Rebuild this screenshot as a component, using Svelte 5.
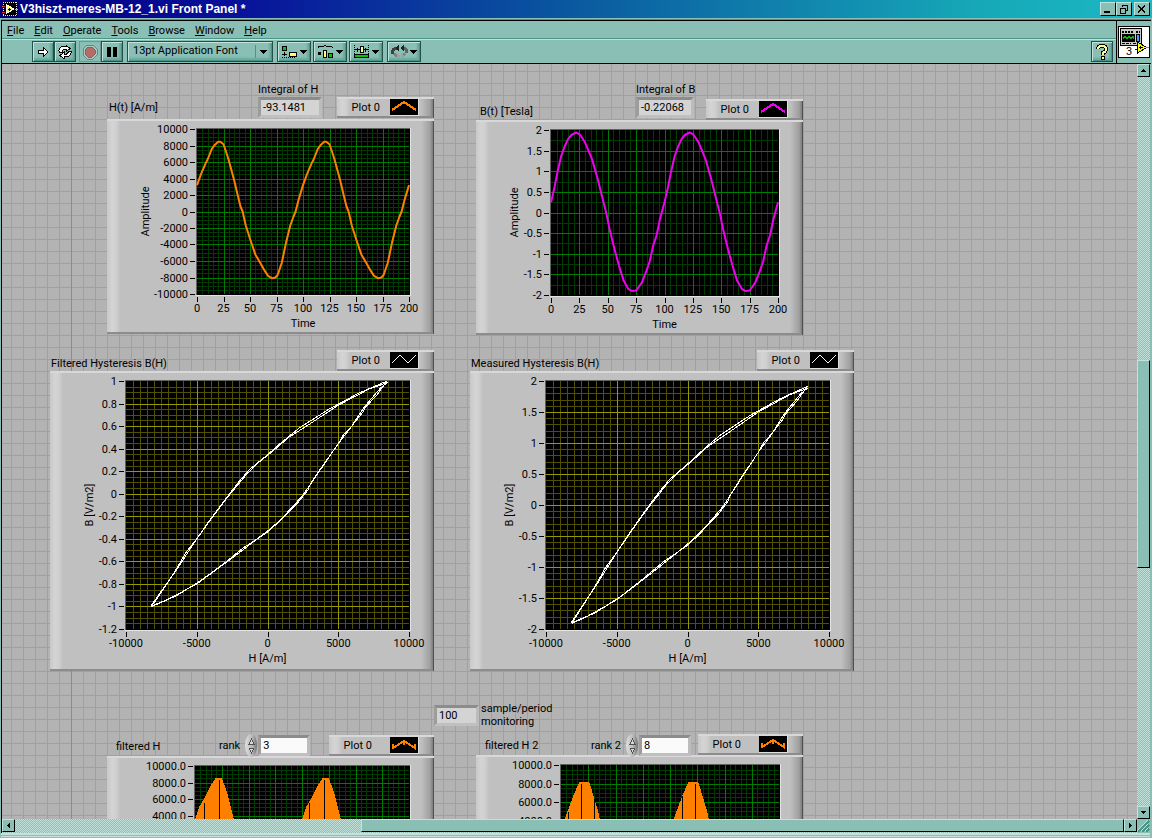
<script>
  const menus = ['File', 'Edit', 'Operate', 'Tools', 'Browse', 'Window', 'Help'];

  // ---------------------------------------------------------
  // Signals
  // ---------------------------------------------------------

  const hPeriod = [
    [0, 3200], [4, 4600], [8, 5800], [10, 6300], [14, 7600], [17, 8100], [20, 8450], [22, 8450],
    [25, 8150], [28, 7000], [30, 6200], [35, 3800], [38, 2200], [41, 600], [43, 0], [46, -1700],
    [50, -3300], [55, -5200], [60, -6300], [64, -7200], [67, -7800], [71, -8100], [74, -8000],
    [76, -7700], [80, -6200], [84, -3800], [88, -1700], [91, -600], [93, 0], [96, 1500]
  ];

  const bPeriod = [
    [0, 0.25], [3, 0.6], [6, 1.02], [9, 1.37], [12, 1.6], [15, 1.78], [18, 1.88], [22, 1.94],
    [25, 1.9], [27, 1.83], [30, 1.7], [33, 1.5], [36, 1.3], [41, 0.83], [45, 0.38], [49, -0.05],
    [52, -0.45], [56, -0.9], [60, -1.3], [64, -1.65], [68, -1.85], [71, -1.9], [75, -1.89],
    [80, -1.7], [84, -1.42], [87, -1.18], [90, -0.8], [93, -0.55], [96, -0.15]
  ];

  const rank3 = [
    [0, 3500], [4, 5100], [7, 5700], [10, 6400], [15, 7700], [19, 8500], [25, 8500], [28, 7500],
    [31, 6300], [36, 3700], [43, 0], [93, 0]
  ];

  const rank8 = [
    [0, 2600], [2, 3700], [6, 5000], [12, 6900], [17, 8150], [26, 8150], [30, 6600], [34, 5000],
    [36, 3900], [43, 0], [95, 0]
  ];

  const loopA = [
    [-8200, -1], [-7300, -0.835], [-6450, -0.67], [-5750, -0.52], [-5000, -0.4], [-4000, -0.22],
    [-2900, -0.035], [-2000, 0.11], [-1270, 0.215], [0, 0.345], [850, 0.44], [2260, 0.585],
    [4400, 0.755], [6500, 0.895], [8450, 1], [7750, 0.88], [6950, 0.77], [6750, 0.725],
    [5950, 0.6], [5400, 0.53], [5000, 0.445], [3670, 0.207], [3000, 0.08], [2850, 0.03],
    [2150, -0.08], [650, -0.27], [0, -0.33], [-1950, -0.52], [-2700, -0.59], [-5000, -0.8],
    [-6700, -0.915], [-7500, -0.965], [-8200, -1]
  ];

  const loopB = [
    [-8200, -0.99], [-7700, -0.9], [-6400, -0.67], [-5000, -0.4], [-3900, -0.21], [-2850, -0.035],
    [-1500, 0.17], [-600, 0.28], [300, 0.37], [1500, 0.5], [3000, 0.62], [5000, 0.785],
    [7200, 0.93], [8450, 0.985], [8000, 0.94], [6850, 0.77], [5900, 0.59], [5000, 0.445],
    [3670, 0.2], [2850, 0.05], [2450, -0.02], [1300, -0.18], [0, -0.34], [-1700, -0.48],
    [-3000, -0.61], [-4700, -0.77], [-6500, -0.91], [-8200, -0.995]
  ];

  function repeat(period) {
    return [...period, ...period.map(([t, v]) => [t + 100, v]), [200, period[0][1]]];
  }

  function scale(points, k) {
    return points.map(([h, b]) => [h, b * k]);
  }

  const timeAxis = { min: 0, max: 200, step: 25, sub: 5, title: 'Time' };
  const fieldAxis = { min: -10000, max: 10000, step: 5000, sub: 10, title: 'H [A/m]' };

  // x, y, w, h: place on the front panel; box: plot area inside the frame.
  // Graphs with `cut` run past the end of the panel and label only the scale above it.
  const graphs = [
    {
      label: 'H(t) [A/m]', labelX: 109, labelY: 100,
      x: 107, y: 119, w: 327, h: 215, box: [90, 10, 212, 165], tone: 'green', axisX: 42,
      legend: { x: 337, y: 97, w: 97, mark: 'orange' },
      xs: timeAxis, ys: { min: -10000, max: 10000, step: 2000, sub: 4, title: 'Amplitude' },
      lines: [repeat(hPeriod)], stroke: 'orange'
    },
    {
      label: 'B(t) [Tesla]', labelX: 480, labelY: 104,
      x: 476, y: 120, w: 327, h: 215, box: [75, 10, 227, 165], tone: 'green', axisX: 42,
      legend: { x: 706, y: 99, w: 97, mark: 'magenta' },
      xs: timeAxis, ys: { min: -2, max: 2, step: 0.5, sub: 2, title: 'Amplitude' },
      lines: [repeat(bPeriod)], stroke: 'magenta'
    },
    {
      label: 'Filtered Hysteresis B(H)', labelX: 51, labelY: 356,
      x: 50, y: 371, w: 384, h: 300, box: [76, 10, 283, 248], tone: 'olive', axisX: 43,
      legend: { x: 337, y: 350, w: 97, mark: 'white' },
      xs: fieldAxis, ys: { min: -1.2, max: 1, step: 0.2, sub: 4, title: 'B [V/m2]' },
      lines: [loopA, loopB], stroke: 'white'
    },
    {
      label: 'Measured Hysteresis B(H)', labelX: 471, labelY: 356,
      x: 470, y: 371, w: 384, h: 300, box: [76, 10, 283, 248], tone: 'olive', axisX: 43,
      legend: { x: 757, y: 350, w: 97, mark: 'white' },
      xs: fieldAxis, ys: { min: -2, max: 2, step: 0.5, sub: 5, title: 'B [V/m2]' },
      lines: [scale(loopA, 1.91), scale(loopB, 1.91)], stroke: 'white'
    },
    {
      label: 'filtered H', labelX: 116, labelY: 739,
      x: 107, y: 756, w: 327, h: 215, box: [88, 10, 214, 165], tone: 'green', cut: true,
      legend: { x: 329, y: 735, w: 105, mark: 'filled' },
      xs: timeAxis, ys: { min: -10000, max: 10000, step: 2000, sub: 4, fixed: 1, from: 4000 },
      lines: [repeat(rank3)], fill: true, notches: [[8, 5500], [22, 8250], [107, 5500], [121, 8250]]
    },
    {
      label: 'filtered H 2', labelX: 485, labelY: 738,
      x: 476, y: 755, w: 327, h: 233, box: [85, 10, 218, 185], tone: 'green', cut: true,
      legend: { x: 698, y: 734, w: 105, mark: 'filled' },
      xs: timeAxis, ys: { min: -10000, max: 10000, step: 2000, sub: 4, fixed: 1, from: 4000 },
      lines: [repeat(rank8)], fill: true, notches: [[6, 4900], [18, 8000], [30, 6300], [111, 6700], [123, 8000]]
    }
  ];

  const indicators = [
    { id: 'int-h', label: 'Integral of H', value: '-93.1481', x: 258, y: 82, w: 64 },
    { id: 'int-b', label: 'Integral of B', value: '-0.22068', x: 636, y: 82, w: 58 }
  ];

  let ranks = $state([
    { id: 'rank', label: 'rank', value: 3, x: 219, y: 734 },
    { id: 'rank2', label: 'rank 2', value: 8, x: 591, y: 734 }
  ]);

  // ---------------------------------------------------------
  // Axis helpers
  // ---------------------------------------------------------

  function px(g, v) {
    return g.box[0] + ((v - g.xs.min) / (g.xs.max - g.xs.min)) * g.box[2];
  }

  function py(g, v) {
    return g.box[1] + ((g.ys.max - v) / (g.ys.max - g.ys.min)) * g.box[3];
  }

  function marks(axis, divisions = 1) {
    const count = Math.round(((axis.max - axis.min) / axis.step) * divisions);
    return Array.from({ length: count + 1 }, (_, i) => axis.min + (i * axis.step) / divisions);
  }

  function labelled(axis) {
    return marks(axis).filter((v) => axis.from === undefined || v >= axis.from);
  }

  function tickText(axis, v) {
    return axis.fixed ? v.toFixed(axis.fixed) : String(Number(v.toFixed(2)));
  }

  // Inner grid lines as one path, snapped to pixels. The ends are the plot border.
  function gridV(g, divisions) {
    return marks(g.xs, divisions)
      .slice(1, -1)
      .map((v) => `M${Math.round(px(g, v)) + 0.5} ${g.box[1]}v${g.box[3]}`)
      .join('');
  }

  function gridH(g, divisions) {
    return marks(g.ys, divisions)
      .slice(1, -1)
      .map((v) => `M${g.box[0]} ${Math.round(py(g, v)) + 0.5}h${g.box[2]}`)
      .join('');
  }

  function toPoints(g, line) {
    return line.map(([a, b]) => `${px(g, a).toFixed(1)},${py(g, b).toFixed(1)}`).join(' ');
  }
</script>

{#snippet caret()}
  <svg width="7" height="4" aria-hidden="true"><path d="M0 0h7L3.5 4z" /></svg>
{/snippet}

{#snippet swatch(mark)}
  <svg class="swatch" width="28" height="16" aria-hidden="true">
    {#if mark === 'white'}
      <path d="M2 11l8-8 8 8 8-8" class="thin" />
    {:else if mark === 'filled'}
      <path d="M3 7v4l11-7 11 7V7M14 4v4" class="orange" />
    {:else}
      <path d="M2 11l12-8 12 8" class={mark} />
    {/if}
  </svg>
{/snippet}

{#snippet graph(g)}
  {@const [l, t, w, h] = g.box}
  <span class="label at" style="left:{g.labelX - 2}px;top:{g.labelY - 64}px">{g.label}</span>
  <div
    class="legend at"
    class:roomy={g.fill}
    style="left:{g.legend.x - 2}px;top:{g.legend.y - 64}px;width:{g.legend.w}px"
  >
    <span>Plot 0</span>
    {@render swatch(g.legend.mark)}
  </div>
  <div class="frame at" style="left:{g.x - 2}px;top:{g.y - 64}px">
    <svg width={g.w} height={g.h} role="img" aria-label={g.label}>
      <rect class="well" x={l - 1} y={t - 1} width={w + 3} height={h + 3} />
      <g class={g.tone}>
        <path class="minor" d={gridV(g, g.xs.sub) + gridH(g, g.ys.sub)} />
        <path class="major" d={gridV(g, 1) + gridH(g, 1)} />
      </g>
      <path class="well-light" d="M{l - 1} {t + h + 1.5}H{l + w + 1.5}V{t - 1}" />
      <path class="well-dark" d="M{l - 0.5} {t + h + 1}V{t - 0.5}H{l + w + 1}" />
      {#each g.lines as line}
        {#if g.fill}
          <polygon class="area" points="{l},{py(g, 0)} {toPoints(g, line)} {l + w},{py(g, 0)}" />
        {:else}
          <polyline class="trace {g.stroke}" points={toPoints(g, line)} />
        {/if}
      {/each}
      {#each g.notches ?? [] as [a, b]}
        <path class="tick" d="M{Math.round(px(g, a)) + 0.5} {py(g, b)}V{py(g, 0)}" />
      {/each}
      {#each labelled(g.ys) as v}
        <path class="tick" d="M{l - 7} {Math.round(py(g, v)) + 0.5}h5" />
        <text class="end" x={l - 9} y={Math.round(py(g, v)) + 4}>{tickText(g.ys, v)}</text>
      {/each}
      {#if !g.cut}
        {#each marks(g.xs) as v}
          <path class="tick" d="M{Math.round(px(g, v)) + 0.5} {t + h + 3}v5" />
          <text class="mid" x={px(g, v)} y={t + h + 18}>{tickText(g.xs, v)}</text>
        {/each}
        <text class="mid" x={l + w / 2} y={t + h + 33}>{g.xs.title}</text>
        <text class="mid" transform="translate({g.axisX} {t + h / 2}) rotate(-90)">{g.ys.title}</text>
      {/if}
    </svg>
  </div>
{/snippet}

<div class="window">
  <header class="titlebar">
    <svg width="16" height="16" aria-hidden="true">
      <rect x="1" y="1" width="14" height="14" fill="#000" />
      <path d="M1 1.5h14M1 14.5h14M1.5 1v14M14.5 1v14" stroke="#e8e8e0" stroke-dasharray="1 1" />
      <path d="M4 3.5L12 8 4 12.5z" fill="#ffff50" stroke="#fff" />
      <path d="M6 8h3M7.5 6.5v3" stroke="#000" />
      <path d="M0 5h3M0 11h3" stroke="#e03030" />
      <path d="M13 8h3" stroke="#f0a020" />
    </svg>
    <h1>V3hiszt-meres-MB-12_1.vi Front Panel *</h1>
    <div class="caption">
      <button aria-label="Minimize"><svg width="12" height="10"><path d="M2 8h6" stroke-width="2" /></svg></button>
      <button aria-label="Restore">
        <svg width="12" height="10"><path d="M4 1h6M4.5 1v2M9.5 1v5.5H8M2 4h6M2.5 4v5.5h5V4" /></svg>
      </button>
      <button class="close" aria-label="Close">
        <svg width="12" height="10"><path d="M2 1.5l7 7M9 1.5l-7 7" stroke-width="2" /></svg>
      </button>
    </div>
  </header>

  <div class="top">
    <div class="bars">
      <nav>
        {#each menus as name}
          <button><u>{name[0]}</u>{name.slice(1)}</button>
        {/each}
      </nav>
      <div class="toolbar">
        <button class="tool" aria-label="Run">
          <svg width="14" height="14"><path d="M2 5.5h5V2l5 5-5 5V8.5H2z" fill="#fff" stroke="#000" /></svg>
        </button>
        <button class="tool" aria-label="Run continuously">
          <svg width="16" height="14" fill="#fff" stroke="#000">
            <path d="M2 5.5Q2 2 6 1.5h3V0l4 3.5L9 7V4.5H6.5L5 6.5v1H2z" />
            <path d="M14 7.5Q14 11 10 11.5H7V14L3 10.5 7 7v2h2.5L11 7.5v-1h3z" />
          </svg>
        </button>
        <button class="tool flat" aria-label="Abort" disabled>
          <svg width="16" height="16">
            <path d="M5 1h6l4 4v6l-4 4H5l-4-4V5z" fill="#a8c8c0" stroke="#6a8680" />
            <path d="M6 3h4l3 3v4l-3 3H6l-3-3V6z" fill="#b46c68" stroke="#8c605c" />
          </svg>
        </button>
        <button class="tool" aria-label="Pause">
          <svg width="12" height="10"><path d="M1 0h4v10H1zM7 0h4v10H7z" /></svg>
        </button>
        <div class="font">
          <select aria-label="Text settings"><option>13pt Application Font</option></select>
          <span>{@render caret()}</span>
        </div>
        <button class="tool wide" aria-label="Align objects">
          <svg width="17" height="14">
            <path d="M1.5 1.5h4v4h-4z" fill="#00c800" stroke="#000" />
            <path d="M8.5 7.5h7v4h-7z" fill="#ffff70" stroke="#000" />
            <path d="M3.5 7v4M1 9.5h5" stroke="#000" />
            <path d="M1 12.5h14" stroke="#000" stroke-dasharray="1 1" />
          </svg>
          {@render caret()}
        </button>
        <button class="tool wide" aria-label="Distribute objects">
          <svg width="17" height="14">
            <path d="M1 2.5L3 1h4l1-1 1 1h5l2 1.5" fill="none" stroke="#000" />
            <path d="M1 7h3v3H1z" />
            <path d="M6.5 5.5h3v7h-3z" fill="#ffff70" stroke="#000" />
            <path d="M11.5 8.5h4v4h-4z" fill="#00c800" stroke="#000" />
          </svg>
          {@render caret()}
        </button>
        <button class="tool wide" aria-label="Resize objects">
          <svg width="17" height="14">
            <path d="M1.5 0v10M15.5 0v10" stroke="#000" stroke-dasharray="1 1" />
            <path d="M2 4.5h13M4.5 2.5v4M12.5 2.5v4" stroke="#000" />
            <path d="M7.5 1.5h3v6h-3z" fill="#ffff70" stroke="#000" />
            <path d="M1.5 9.5h14v3h-14z" fill="#00c800" stroke="#000" />
          </svg>
          {@render caret()}
        </button>
        <button class="tool wide last" aria-label="Reorder">
          <svg width="17" height="14">
            <path d="M2 9Q0 4 6 3" fill="none" stroke="#404040" stroke-width="3" />
            <path d="M11 3Q17 3 15 8" fill="none" stroke="#606060" stroke-width="3" />
            <path d="M3 9q2 2 4 2M14 9q-2 2-4 2" fill="none" stroke="#808080" stroke-width="3" />
            <path d="M4 3l4-3v6zM9 3l4-3v6z" fill="#202020" />
            <path d="M6 8l3 3-3 3zM10 8l3 3-3 3z" fill="#a0a0a0" />
          </svg>
          {@render caret()}
        </button>
        <button class="tool help" aria-label="Show context help">
          <svg width="14" height="16">
            <path d="M3 5Q3 2 7 2t4 3-3 4v2" fill="none" stroke="#000" stroke-width="4" />
            <path d="M6 12h4v4H6z" />
            <path d="M3 5Q3 2 7 2t4 3-3 4v2" fill="none" stroke="#ffff90" stroke-width="2" />
            <path d="M7 13h2v2H7z" fill="#ffff90" />
          </svg>
        </button>
      </div>
    </div>
    <div class="vi-icon">
      <svg width="32" height="32" role="img" aria-label="VI icon">
        <rect x="0.5" y="0.5" width="31" height="31" fill="#fff" stroke="#000" />
        <rect x="2.5" y="2.5" width="21" height="17" fill="#c8c8c8" stroke="#000" />
        <path d="M4 6h11M18 6h4" stroke="#000" stroke-width="2" stroke-dasharray="2 1" />
        <rect x="4" y="8" width="13" height="8" fill="#000" />
        <path d="M5 12.5l2-2 2 2 2-2 2 2 2-2 1 2" fill="none" stroke="#00c000" />
        <rect x="18.5" y="8.5" width="3" height="7" fill="#40a0ff" stroke="#000" />
        <path d="M4 17.5h9M15 17.5h6" stroke="#000" stroke-dasharray="3 1" />
        <path d="M19.5 16v11l9-5.5z" fill="#ffff00" stroke="#000" />
        <path d="M21 21.5h4M22.5 20v3" stroke="#000" />
        <path d="M17 23.5h2" stroke="#0000e0" />
        <path d="M28 21.5h3" stroke="#f06000" />
        <text x="8" y="29">3</text>
      </svg>
    </div>
  </div>

  <div class="work">
    <main class="panel">
      <i class="origin at"></i>
      {#each graphs as g}
        {@render graph(g)}
      {/each}

      {#each indicators as n}
        <div class="indicator at" style="left:{n.x - 2}px;top:{n.y - 64}px">
          <label for={n.id}>{n.label}</label>
          <output id={n.id} class="recess" style="width:{n.w}px">{n.value}</output>
        </div>
      {/each}

      <div class="sample at">
        <output id="sample" class="recess">100</output>
        <label for="sample">sample/period<br />monitoring</label>
      </div>

      {#each ranks as r}
        <div class="rank at" style="left:{r.x - 2}px;top:{r.y - 64}px">
          <label for={r.id}>{r.label}</label>
          <span class="spin">
            <button aria-label="Increment {r.label}" onclick={() => r.value++}>
              <svg width="7" height="8"><path d="M1 6l2.5-5L6 6z" /></svg>
            </button>
            <button aria-label="Decrement {r.label}" onclick={() => r.value--}>
              <svg width="7" height="8"><path d="M1 2l2.5 5L6 2z" /></svg>
            </button>
          </span>
          <input id={r.id} class="recess" bind:value={r.value} />
        </div>
      {/each}
    </main>

    <div class="scroll vertical">
      <button aria-label="Scroll up"><svg width="5" height="3"><path d="M0 3h5L2.5 0z" /></svg></button>
      <span class="before"></span>
      <span class="thumb"></span>
      <span class="after"></span>
      <button aria-label="Scroll down"><svg width="5" height="3"><path d="M0 0h5L2.5 3z" /></svg></button>
    </div>

    <div class="scroll horizontal">
      <button aria-label="Scroll left"><svg width="3" height="5"><path d="M3 0v5L0 2.5z" /></svg></button>
      <span class="before"></span>
      <span class="thumb"></span>
      <button aria-label="Scroll right"><svg width="3" height="5"><path d="M0 0v5l3-2.5z" /></svg></button>
    </div>

    <svg width="13" height="14" aria-hidden="true">
      <path d="M1 13L12 2M5 13l7-7M9 13l3-3" stroke="#4a9488" stroke-width="2" />
      <path d="M0 12L11 1M4 12l7-7M8 12l3-3" stroke="#c8e4de" />
    </svg>
  </div>
</div>

<style>
  :global(body) {
    margin: 0;
  }

  .window {
    --teal: #8abfb5;
    --light: #c4e2dc;
    --dark: #4a9488;
    box-sizing: border-box;
    height: 100vh;
    display: flex;
    flex-direction: column;
    overflow: hidden;
    background: var(--teal);
    color: #000;
    font: 11px/13px Roboto, 'Liberation Sans', Arial, sans-serif;
  }

  button,
  input,
  select {
    font: inherit;
    color: inherit;
    margin: 0;
    padding: 0;
    border: 0;
    border-radius: 0;
  }

  svg {
    display: block;
    flex: none;
    shape-rendering: crispEdges;
  }

  /* Title bar */
  .titlebar {
    display: flex;
    align-items: center;
    height: 18px;
    padding: 0 2px;
    gap: 2px;
    background: linear-gradient(90deg, #000080, #08109a 20%, #0a5aa0 50%, #16a8b8 85%, #1cb8c4);
    border-bottom: 1px solid var(--teal);
  }

  h1 {
    flex: 1;
    margin: 0;
    font: bold 12px/16px 'Liberation Sans', Arial, sans-serif;
    color: #fff;
  }

  .caption {
    display: flex;
  }

  .caption button {
    width: 16px;
    height: 14px;
    display: flex;
    align-items: center;
    justify-content: center;
    background: var(--teal);
    border: 1px solid;
    border-color: var(--light) #000 #000 var(--light);
  }

  .caption path {
    fill: none;
    stroke: #000;
  }

  .caption .close {
    margin-left: 2px;
  }

  /* Menu and toolbar */
  .top {
    display: flex;
    height: 42px;
    margin: 1px 1px 0;
    border: solid #000;
    border-width: 1px 0 1px 1px;
    box-shadow: 0 -1px var(--dark);
  }

  .bars {
    flex: 1;
    border-right: 1px solid #000;
  }

  nav {
    display: flex;
    gap: 10px;
    height: 17px;
    padding-left: 5px;
    border-bottom: 1px solid var(--dark);
  }

  nav button {
    padding-top: 2px;
    background: none;
  }

  .toolbar {
    display: flex;
    align-items: center;
    height: 23px;
    padding: 0 3px 0 30px;
    border-top: 1px solid var(--light);
  }

  .tool,
  .font {
    box-sizing: border-box;
    height: 21px;
    background: var(--teal);
    border: 1px solid #24504a;
    box-shadow: inset 1px 1px var(--light), inset -1px -1px var(--dark), inset -3px -3px 2px #6ba89d;
  }

  .tool {
    width: 22px;
    display: flex;
    align-items: center;
    justify-content: center;
    gap: 2px;
  }

  .tool.flat {
    margin-left: 3px;
    border-color: #6a9890;
    box-shadow: none;
  }

  .tool.wide {
    width: 34px;
    margin-right: 2px;
  }

  .tool.wide.last {
    margin-left: 2px;
  }

  .tool.help {
    margin-left: auto;
  }

  .font {
    position: relative;
    width: 146px;
    margin: 0 4px;
  }

  .font select {
    width: 100%;
    height: 100%;
    padding: 0 20px 2px 5px;
    appearance: none;
    background: none;
  }

  .font span {
    position: absolute;
    right: 5px;
    top: 3px;
    height: 13px;
    padding-left: 4px;
    display: flex;
    align-items: center;
    border-left: 1px solid var(--dark);
    pointer-events: none;
  }

  .vi-icon {
    width: 34px;
    display: flex;
    align-items: center;
    justify-content: center;
  }

  /* Front panel */
  .work {
    flex: 1;
    min-height: 0;
    display: grid;
    grid-template: minmax(0, 1fr) 14px / minmax(0, 1fr) 13px;
    margin: 0 2px 5px 1px;
    border-left: 1px solid #000;
    box-shadow: 0 2px var(--light), 0 3px var(--teal), 0 4px var(--light);
  }

  .panel {
    position: relative;
    overflow: hidden;
    background:
      repeating-linear-gradient(90deg, transparent 0 9px, #a0a0a0 9px 10px, transparent 10px 12px),
      repeating-linear-gradient(transparent 0 7px, #a0a0a0 7px 8px, transparent 8px 12px),
      #b3b3b3;
  }

  .at {
    position: absolute;
  }

  .origin {
    left: 69px;
    top: 0;
    bottom: 0;
    width: 1px;
    background: #8c8c8c;
  }

  .label {
    white-space: nowrap;
    line-height: 16px;
  }

  .frame,
  .legend {
    background:
      linear-gradient(90deg, #c8c8c8, #d4d4d4 5px, #d0d0d0 9px, #c0c0c0 13px, transparent 13px),
      linear-gradient(270deg, #707070, #a0a0a0 4px, #c0c0c0 13px, transparent 13px),
      #c0c0c0;
    box-shadow: inset 0 2px #d8d8d8, inset -1px 0 #505050, inset 0 -2px #8c8c8c;
  }

  .legend {
    box-sizing: border-box;
    height: 21px;
    padding-right: 15px;
    display: flex;
    align-items: center;
    justify-content: flex-end;
    gap: 10px;
  }

  .legend.roomy {
    gap: 18px;
  }

  .swatch {
    background: #000;
    border: solid #e0e0e0;
    border-width: 0 1px 1px 0;
  }

  .swatch path {
    fill: none;
    stroke-width: 2;
  }

  .swatch .thin {
    stroke: #fff;
    stroke-width: 1;
  }

  .well {
    fill: #000;
  }

  .well-light,
  .well-dark,
  .minor,
  .major,
  .trace {
    fill: none;
  }

  .well-light {
    stroke: #e4e4e4;
  }

  .well-dark {
    stroke: #606060;
  }

  .green .minor {
    stroke: #003c00;
  }

  .green .major {
    stroke: #007c00;
  }

  .olive .minor {
    stroke: #505000;
  }

  .olive .major {
    stroke: #989800;
  }

  .trace {
    stroke-width: 2;
    stroke-linejoin: round;
    shape-rendering: geometricPrecision;
  }

  .orange {
    stroke: #ff8000;
  }

  .magenta {
    stroke: #f000f0;
  }

  .trace.white {
    stroke: #fff;
    stroke-width: 1;
    shape-rendering: crispEdges;
  }

  .area {
    fill: #ff8000;
  }

  .tick {
    stroke: #000;
  }

  .end {
    text-anchor: end;
  }

  .mid {
    text-anchor: middle;
  }

  /* Numeric controls */
  .recess {
    box-sizing: border-box;
    display: block;
    height: 21px;
    padding-left: 2px;
    line-height: 15px;
    background: #d4d4d4;
    border: 3px solid;
    border-color: #8c8c8c #bcbcbc #c0c0c0 #9c9c9c;
  }

  .indicator label {
    display: block;
    line-height: 15px;
  }

  .sample {
    left: 432px;
    top: 638px;
    display: flex;
    align-items: center;
    gap: 2px;
  }

  .sample .recess {
    width: 45px;
  }

  .rank {
    display: flex;
    align-items: center;
  }

  .rank .recess {
    width: 52px;
    background: #fafafa;
  }

  .spin {
    width: 12px;
    height: 23px;
    margin: 0 1px 0 5px;
    display: flex;
    flex-direction: column;
    justify-content: center;
    align-items: center;
    border-radius: 50%;
    background: linear-gradient(90deg, #e0e0e0, #b8b8b8 60%, #707070);
  }

  .spin button {
    background: none;
  }

  .spin path {
    fill: #d8d8d8;
    stroke: #505050;
  }

  /* Scrollbars */
  .scroll {
    display: flex;
    background: repeating-conic-gradient(var(--light) 0 25%, var(--teal) 0 50%) 0 0 / 2px 2px;
  }

  .vertical {
    flex-direction: column;
  }

  .scroll button,
  .thumb {
    box-sizing: border-box;
    display: flex;
    align-items: center;
    justify-content: center;
    background: var(--teal);
    border: 1px solid;
    border-color: var(--light) #000 #000 var(--light);
  }

  .scroll button {
    width: 13px;
    height: 13px;
    flex: none;
  }

  .vertical .before {
    flex: 284;
  }

  .vertical .thumb {
    flex: 207;
  }

  .vertical .after {
    flex: 239;
  }

  .horizontal .before {
    flex: 347;
  }

  .horizontal .thumb {
    flex: 763;
    height: 13px;
  }
</style>
